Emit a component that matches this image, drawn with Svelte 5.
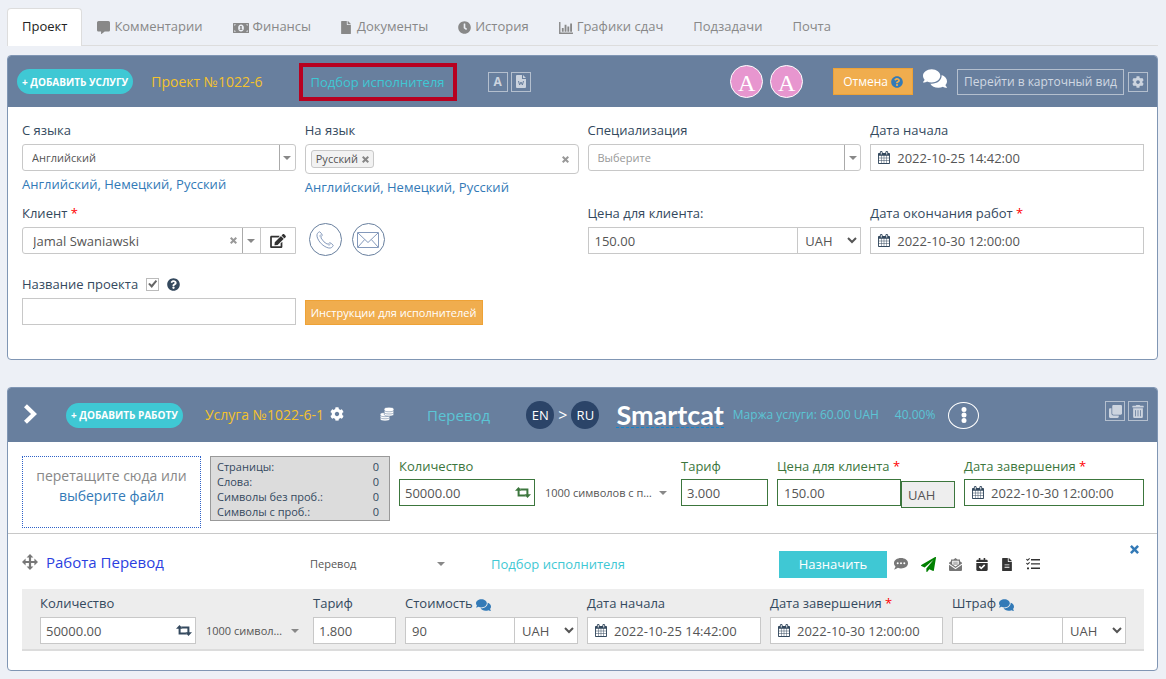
<script>
  const icons = {
    comment: ['0 0 512 512', 'M448 0H64C28.7 0 0 28.7 0 64v288c0 35.3 28.7 64 64 64h96v84c0 9.8 11.2 15.5 19.1 9.7L304 416h144c35.3 0 64-28.7 64-64V64c0-35.3-28.7-64-64-64z'],
    money: ['0 0 640 400', 'M20 0H620Q640 0 640 20V380Q640 400 620 400H20Q0 400 0 380V20Q0 0 20 0ZM50 50V110Q100 105 110 50ZM590 50V110Q540 105 530 50ZM50 350V290Q100 295 110 350ZM590 350V290Q540 295 530 350ZM320 60C250 60 205 120 205 200S250 340 320 340 435 280 435 200 390 60 320 60ZM290 120H350V245H375V280H265V245H292V165H265Z'],
    file: ['0 0 384 512', 'M224 136V0H24C10.7 0 0 10.7 0 24v464c0 13.3 10.7 24 24 24h336c13.3 0 24-10.7 24-24V160H248c-13.2 0-24-10.8-24-24zm160-14.1v6.1H256V0h6.1c6.4 0 12.5 2.5 17 7l97.9 98c4.5 4.5 7 10.6 7 16.9z'],
    clock: ['0 0 512 512', 'M256,8C119,8,8,119,8,256S119,504,256,504,504,393,504,256,393,8,256,8Zm92.49,313h0l-20,25a16,16,0,0,1-22.49,2.5h0l-67-49.72a40,40,0,0,1-15-31.23V112a16,16,0,0,1,16-16h32a16,16,0,0,1,16,16V256l58,42.5A16,16,0,0,1,348.49,321Z'],
    chart: ['0 0 15 13', 'M0 0H1.5V11.3H15V13H0ZM3 6.500H5V10.500H3ZM6 3H8V10.500H6ZM9 5H11V10.500H9ZM12 1.500H14V10.500H12Z'],
    comments: ['0 32 576 448', 'M416 192c0-88.4-93.1-160-208-160S0 103.6 0 192c0 34.3 14.1 65.9 38 92-13.4 30.2-35.5 54.2-35.8 54.5-2.2 2.3-2.8 5.7-1.5 8.7S4.8 352 8 352c36.6 0 66.9-12.3 88.7-25 32.2 15.7 70.3 25 111.3 25 114.9 0 208-71.6 208-160zm122 220c23.9-26 38-57.7 38-92 0-66.9-53.5-124.2-129.3-148.1.9 6.6 1.3 13.3 1.3 20.1 0 105.9-107.7 192-240 192-10.8 0-21.3-.8-31.7-1.9C207.8 439.6 281.8 480 368 480c41 0 79.1-9.2 111.3-25 21.8 12.7 52.1 25 88.7 25 3.2 0 6.1-1.9 7.3-4.8 1.3-2.9.7-6.3-1.5-8.7-.3-.3-22.4-24.2-35.8-54.5z'],
    cog: ['0 0 512 512', 'M487.4 315.7l-42.6-24.6c4.3-23.2 4.3-47 0-70.2l42.6-24.6c4.9-2.8 7.1-8.6 5.5-14-11.1-35.6-30-67.8-54.7-94.6-3.8-4.1-10-5.1-14.8-2.3L380.8 110c-17.9-15.4-38.5-27.3-60.8-35.1V25.8c0-5.6-3.9-10.5-9.4-11.7-36.7-8.2-74.3-7.8-109.2 0-5.5 1.2-9.4 6.1-9.4 11.7V75c-22.2 7.9-42.8 19.8-60.8 35.1L88.7 85.5c-4.9-2.8-11-1.9-14.8 2.3-24.7 26.7-43.6 58.9-54.7 94.6-1.7 5.4.6 11.2 5.5 14L67.3 221c-4.3 23.2-4.3 47 0 70.2l-42.6 24.6c-4.9 2.8-7.1 8.6-5.5 14 11.1 35.6 30 67.8 54.7 94.6 3.8 4.1 10 5.1 14.8 2.3l42.6-24.6c17.9 15.4 38.5 27.3 60.8 35.1v49.2c0 5.6 3.9 10.5 9.4 11.7 36.7 8.2 74.3 7.8 109.2 0 5.5-1.2 9.4-6.1 9.4-11.7v-49.2c22.2-7.9 42.8-19.8 60.8-35.1l42.6 24.6c4.9 2.8 11 1.9 14.8-2.3 24.7-26.7 43.6-58.9 54.7-94.6 1.5-5.5-.7-11.3-5.6-14.1zM256 336c-44.1 0-80-35.9-80-80s35.9-80 80-80 80 35.9 80 80-35.9 80-80 80z'],
    question: ['0 0 512 512', 'M504 256c0 136.997-111.043 248-248 248S8 392.997 8 256C8 119.083 119.043 8 256 8s248 111.083 248 248zM262.655 90c-54.497 0-89.255 22.957-116.549 63.758-3.536 5.286-2.353 12.415 2.715 16.258l34.699 26.31c5.205 3.947 12.621 3.008 16.665-2.122 17.864-22.658 30.113-35.797 57.303-35.797 20.429 0 45.698 13.148 45.698 32.958 0 14.976-12.363 22.667-32.534 33.976C247.128 238.528 216 254.941 216 296v4c0 6.627 5.373 12 12 12h56c6.627 0 12-5.373 12-12v-1.333c0-28.462 83.186-29.647 83.186-106.667 0-58.002-60.165-102-116.531-102zM256 338c-25.365 0-46 20.635-46 46 0 25.364 20.635 46 46 46s46-20.636 46-46c0-25.365-20.635-46-46-46z'],
    calendar: ['64 0 1664 1792', 'M192 1664h288v-288h-288v288zm352 0h320v-288h-320v288zm-352-352h288v-320h-288v320zm352 0h320v-320h-320v320zm-352-384h288v-288h-288v288zm736 736h320v-288h-320v288zm-384-736h320v-288h-320v288zm768 736h288v-288h-288v288zm-384-352h320v-320h-320v320zm-352-864v-288q0-13-9.5-22.5t-22.5-9.5h-64q-13 0-22.5 9.5t-9.5 22.5v288q0 13 9.5 22.5t22.5 9.5h64q13 0 22.5-9.5t9.5-22.5zm736 864h288v-320h-288v320zm-384-384h320v-288h-320v288zm384 0h288v-288h-288v288zm32-480v-288q0-13-9.5-22.5t-22.5-9.5h-64q-13 0-22.5 9.5t-9.5 22.5v288q0 13 9.5 22.5t22.5 9.5h64q13 0 22.5-9.5t9.5-22.5zm384-64v1280q0 52-38 90t-90 38h-1408q-52 0-90-38t-38-90v-1280q0-52 38-90t90-38h128v-96q0-66 47-113t113-47h64q66 0 113 47t47 113v96h384v-96q0-66 47-113t113-47h64q66 0 113 47t47 113v96h128q52 0 90 38t38 90z'],
    edit: ['0 0 576 512', 'M402.6 83.2l90.2 90.2c3.8 3.8 3.8 10 0 13.8L274.4 405.6l-92.8 10.3c-12.4 1.4-22.9-9.1-21.5-21.5l10.3-92.8L388.8 83.2c3.8-3.8 10-3.8 13.8 0zm162-22.9l-48.8-48.8c-15.2-15.2-39.9-15.2-55.2 0l-35.4 35.4c-3.8 3.8-3.8 10 0 13.8l90.2 90.2c3.8 3.8 10 3.8 13.8 0l35.4-35.4c15.2-15.3 15.2-40 0-55.2zM384 346.2V448H64V128h229.8c3.2 0 6.2-1.3 8.5-3.5l40-40c7.6-7.6 2.2-20.5-8.5-20.5H48C21.5 64 0 85.5 0 112v352c0 26.5 21.5 48 48 48h352c26.5 0 48-21.5 48-48V306.2c0-10.7-12.9-16-20.5-8.5l-40 40c-2.2 2.3-3.5 5.3-3.5 8.5z'],
    plane: ['0 0 1792 1792', 'M1764 11q33 24 27 64l-256 1536q-5 29-32 45-14 8-31 8-11 0-24-5l-453-185-242 295q-18 23-49 23-13 0-22-4-19-7-30.5-23.5t-11.5-36.5v-349l864-1059-1069 925-395-162q-37-14-40-55-2-40 32-59L1688 9q15-9 32-9 24 0 44 11z'],
    fileLines: ['0 0 384 512', 'M224 136V0H24C10.7 0 0 10.7 0 24v464c0 13.3 10.7 24 24 24h336c13.3 0 24-10.7 24-24V160H248c-13.2 0-24-10.8-24-24zm64 248H96V346H288V384ZM288 290H96V252H288V290zm96-168.100v6.100H256V0h6.1c6.4 0 12.5 2.5 17 7l97.9 98c4.5 4.5 7 10.6 7 16.9z'],
    calendarCheck: ['0 0 448 512', 'M436 160H12c-6.627 0-12-5.373-12-12v-36c0-26.51 21.49-48 48-48h48V12c0-6.627 5.373-12 12-12h40c6.627 0 12 5.373 12 12v52h128V12c0-6.627 5.373-12 12-12h40c6.627 0 12 5.373 12 12v52h48c26.51 0 48 21.49 48 48v36c0 6.627-5.373 12-12 12zM12 192h424c6.627 0 12 5.373 12 12v260c0 26.51-21.49 48-48 48H48c-26.51 0-48-21.49-48-48V204c0-6.627 5.373-12 12-12zm333.296 95.947l-28.169-28.398c-4.667-4.705-12.265-4.736-16.97-.068L194.12 364.665l-45.98-46.352c-4.667-4.705-12.266-4.736-16.971-.068l-28.397 28.17c-4.705 4.667-4.736 12.265-.068 16.97l82.601 83.269c4.667 4.705 12.265 4.736 16.97.068l142.953-141.805c4.705-4.667 4.736-12.265.068-16.97z'],
    clone: ['0 0 512 512', 'M464 0c26.51 0 48 21.49 48 48v288c0 26.51-21.49 48-48 48H176c-26.51 0-48-21.49-48-48V48c0-26.51 21.49-48 48-48h288M176 416c-44.112 0-80-35.888-80-80V128H48c-26.51 0-48 21.49-48 48v288c0 26.51 21.49 48 48 48h288c26.51 0 48-21.49 48-48v-48H176z'],
    trash: ['0 0 448 512', 'M32 464a48 48 0 0 0 48 48h288a48 48 0 0 0 48-48V128H32zm272-256a16 16 0 0 1 32 0v224a16 16 0 0 1-32 0zm-96 0a16 16 0 0 1 32 0v224a16 16 0 0 1-32 0zm-96 0a16 16 0 0 1 32 0v224a16 16 0 0 1-32 0zM432 32H312l-9.400-18.700A24 24 0 0 0 281.100 0H166.800a23.720 23.720 0 0 0-21.400 13.300L136 32H16A16 16 0 0 0 0 48v32a16 16 0 0 0 16 16h416a16 16 0 0 0 16-16V48a16 16 0 0 0-16-16z'],
    retweet: ['0 0 16 11', 'M3.500 0 7 3.800H4.600V7.600H9.600L11.200 9.400H2.600V3.800H0ZM12.500 11 9 7.200H11.400V3.400H6.400L4.800 1.600H13.400V7.200H16Z'],
    move: ['0 0 16 16', 'M8 0 11.400 3.600H9.100V6.900H12.400V4.600L16 8 12.400 11.400V9.100H9.100V12.400H11.400L8 16 4.600 12.400H6.900V9.100H3.600V11.400L0 8 3.600 4.600V6.900H6.900V3.600H4.600Z'],
    chevron: ['0 0 12 18', 'M2.700 0 12 9 2.700 18 0 15.300 6.500 9 0 2.700Z'],
    close: ['0 0 10 10', 'M2 0 5 3 8 0 10 2 7 5 10 8 8 10 5 7 2 10 0 8 3 5 0 2Z'],
    dots: ['0 0 6 16', 'M3 0A2.500 2.500 0 1 1 3 5A2.500 2.500 0 1 1 3 0ZM3 5.500A2.500 2.500 0 1 1 3 10.500A2.500 2.500 0 1 1 3 5.500ZM3 11A2.500 2.500 0 1 1 3 16A2.500 2.500 0 1 1 3 11Z'],
    bubble: ['0 0 14 12', 'M7 0C11 0 14 2.200 14 5.200S11 10.400 7 10.400C5.900 10.400 4.800 10.200 3.900 9.800 2.900 10.600 1.600 11.300 0 11.400 .8 10.500 1.300 9.400 1.500 8.500 .6 7.600 0 6.500 0 5.200 0 2.200 3 0 7 0ZM3.700 4.300A1 1 0 1 0 3.700 6.300A1 1 0 1 0 3.700 4.300ZM7 4.300A1 1 0 1 0 7 6.300A1 1 0 1 0 7 4.300ZM10.300 4.300A1 1 0 1 0 10.300 6.300A1 1 0 1 0 10.300 4.300Z'],
    mail: ['0 0 13 13', 'M6.500 0 8.500 1.500H11V3.300L13 4.800V5.500L6.500 10 0 5.500V4.800L2 3.300V1.500H4.500ZM3.200 2.700V6.300L6.500 8.600 9.800 6.300V2.700ZM4.200 3.700H8.800V4.600H4.200ZM4.200 5.500H8.800V6.400H4.200ZM0 6.800 6.500 11.200 13 6.800V12Q13 13 12 13H1Q0 13 0 12Z'],
    checklist: ['0 0 14 12', 'M0 1.500 .8 .8 1.600 1.600 3.300 0 4 .7 1.600 3ZM0 5.500 .8 4.800 1.600 5.600 3.300 4 4 4.700 1.600 7ZM1 9.400H3V11.300H1ZM5 1H14V2.400H5ZM5 5.200H14V6.600H5ZM5 9.600H14V11H5Z']
  };

  const tabs = [
    { name: 'Проект', active: true },
    { name: 'Комментарии', icon: 'comment', w: 13, h: 13 },
    { name: 'Финансы', icon: 'money', w: 16, h: 10 },
    { name: 'Документы', icon: 'file', w: 10, h: 13, wide: true },
    { name: 'История', icon: 'clock', w: 13, h: 13 },
    { name: 'Графики сдач', icon: 'chart', w: 14, h: 12 },
    { name: 'Подзадачи' },
    { name: 'Почта' }
  ];

  const stats = [
    ['Страницы:', 0],
    ['Слова:', 0],
    ['Символы без проб.:', 0],
    ['Символы с проб.:', 0]
  ];
</script>

{#snippet icon(name, w, h)}
  <svg class="icon" width={w} height={h} viewBox={icons[name][0]} fill="currentColor" fill-rule="evenodd" aria-hidden="true"><path d={icons[name][1]} /></svg>
{/snippet}

{#snippet dateField(id, value)}
  <div class="field">
    <span class="cal">{@render icon('calendar', 12, 13)}</span>
    <input {id} type="text" {value} />
  </div>
{/snippet}

{#snippet currency(label)}
  <select class="currency" aria-label={label}><option>UAH</option></select>
{/snippet}

<nav class="tabs">
  {#each tabs as t}
    <a href="#tab" class:active={t.active}>
      {#if t.icon}<span class="tab-icon" class:wide={t.wide}>{@render icon(t.icon, t.w, t.h)}</span>{/if}{t.name}
    </a>
  {/each}
</nav>

<section class="panel project">
  <header>
    <button class="pill">+ ДОБАВИТЬ УСЛУГУ</button>
    <h2 class="number">Проект №1022-6</h2>
    <a class="pick framed" href="#pick">Подбор исполнителя</a>
    <div class="pair">
      <button class="square letter" aria-label="A">A</button>
      <button class="square" aria-label="Word">
        <svg width="10" height="13" viewBox="0 0 10 13" aria-hidden="true">
          <path d="M1 0H6V4H10V12Q10 13 9 13H1Q0 13 0 12V1Q0 0 1 0ZM7 0 10 3H7Z" fill="currentColor" />
          <path d="M2.500 6 3.600 10 5 7 6.400 10 7.500 6" fill="none" stroke="#687f9e" stroke-width="1" />
        </svg>
      </button>
    </div>
    <div class="avatars">
      <span class="avatar">A</span>
      <span class="avatar">A</span>
    </div>
    <button class="orange cancel">Отмена <span class="blue">{@render icon('question', 12, 12)}</span></button>
    <button class="bare talk" aria-label="Чат">{@render icon('comments', 24, 19)}</button>
    <button class="outline">Перейти в карточный вид</button>
    <button class="square" aria-label="Настройки">{@render icon('cog', 12, 12)}</button>
  </header>

  <div class="form">
    <div class="group">
      <label for="from">С языка</label>
      <div class="combo">
        <select id="from"><option>Английский</option></select>
        <span class="caret"></span>
      </div>
      <p class="links"><a href="#en">Английский</a>, <a href="#de">Немецкий</a>, <a href="#ru">Русский</a></p>
    </div>
    <div class="group">
      <label for="to">На язык</label>
      <div class="chips">
        <span class="chip">Русский <button class="bare" aria-label="Удалить">{@render icon('close', 7, 7)}</button></span>
        <input id="to" type="text" />
        <button class="bare" aria-label="Очистить">{@render icon('close', 7, 7)}</button>
      </div>
      <p class="links"><a href="#en">Английский</a>, <a href="#de">Немецкий</a>, <a href="#ru">Русский</a></p>
    </div>
    <div class="group">
      <label for="spec">Специализация</label>
      <div class="combo empty">
        <select id="spec"><option>Выберите</option></select>
        <span class="caret"></span>
      </div>
    </div>
    <div class="group">
      <label for="start">Дата начала</label>
      {@render dateField('start', '2022-10-25 14:42:00')}
    </div>

    <div class="group">
      <label for="client">Клиент <b>*</b></label>
      <div class="combo client">
        <select id="client"><option>Jamal Swaniawski</option></select>
        <button class="bare clear" aria-label="Очистить">{@render icon('close', 7, 7)}</button>
        <span class="caret"></span>
        <button class="bare edit" aria-label="Редактировать">{@render icon('edit', 16, 14)}</button>
      </div>
    </div>
    <div class="contacts">
      <button class="round" aria-label="Позвонить">
        <svg width="18" height="18" viewBox="0 0 18 18" fill="none" stroke="currentColor" aria-hidden="true"><path d="M3.600 .8C2 1.200 .6 3 1 5.200 2 10.500 7.500 16 12.800 17 15 17.400 16.800 16 17.200 14.400Q15.500 12 13.800 11.700 12.500 13.400 11 13 8 11.800 5 7 4.600 5.500 6.300 4.200 6 2.500 3.600 .8ZM4.800 3.600Q3.800 4.600 4 5.600M12.400 14Q13.400 14.200 14.400 13.200" /></svg>
      </button>
      <button class="round" aria-label="Написать">
        <svg width="22" height="16" viewBox="0 0 22 16" fill="none" stroke="currentColor" aria-hidden="true"><path d="M.5 .5H21.500V15.500H.5ZM1 1 11 10.500 21 1M1 15 7.700 7.500M21 15 14.300 7.500" /></svg>
      </button>
    </div>
    <div class="group">
      <label for="price">Цена для клиента:</label>
      <div class="joined">
        <input id="price" type="text" value="150.00" />
        {@render currency('Валюта цены')}
      </div>
    </div>
    <div class="group">
      <label for="end">Дата окончания работ <b>*</b></label>
      {@render dateField('end', '2022-10-30 12:00:00')}
    </div>

    <div class="group">
      <div class="name-line">
        <label for="name">Название проекта</label>
        <input type="checkbox" checked aria-label="Показывать название" />
        {@render icon('question', 13, 13)}
      </div>
      <div class="field"><input id="name" type="text" /></div>
    </div>
    <div class="bottom">
      <button class="orange guide">Инструкции для исполнителей</button>
    </div>
  </div>
</section>

<section class="panel">
  <header class="service-head">
    <button class="bare expand" aria-label="Развернуть">{@render icon('chevron', 13, 20)}</button>
    <button class="pill">+ ДОБАВИТЬ РАБОТУ</button>
    <h2 class="number small">Услуга №1022-6-1</h2>
    <button class="bare settings" aria-label="Настройки услуги">{@render icon('cog', 14, 14)}</button>
    <button class="bare coins" aria-label="Оплата">
      <svg width="14" height="14" viewBox="0 0 14 14" aria-hidden="true">
        <g fill="#fff" stroke="#687f9e" stroke-width=".6">
          <ellipse cx="5" cy="11.800" rx="4.900" ry="2.100" /><ellipse cx="5" cy="9.700" rx="4.900" ry="2.100" /><ellipse cx="5" cy="7.600" rx="4.900" ry="2.100" />
          <ellipse cx="9" cy="7" rx="4.900" ry="2.100" /><ellipse cx="9" cy="4.900" rx="4.900" ry="2.100" /><ellipse cx="9" cy="2.500" rx="4.900" ry="2.300" />
        </g>
      </svg>
    </button>
    <a class="kind" href="#service">Перевод</a>
    <div class="langs"><span>EN</span><i>&gt;</i><span>RU</span></div>
    <a class="smartcat" href="#smartcat">Smartcat</a>
    <p class="margin">Маржа услуги: 60.00 UAH</p>
    <p class="margin percent">40.00%</p>
    <button class="more" aria-label="Ещё">{@render icon('dots', 6, 16)}</button>
    <div class="pair end">
      <button class="square" aria-label="Копировать">{@render icon('clone', 13, 13)}</button>
      <button class="square" aria-label="Удалить">{@render icon('trash', 12, 13)}</button>
    </div>
  </header>

  <div class="service">
    <div class="drop">перетащите сюда или <a href="#file">выберите файл</a></div>
    <dl class="stats">
      {#each stats as [k, v]}
        <div><dt>{k}</dt><dd>{v}</dd></div>
      {/each}
    </dl>
    <div class="group green">
      <label for="qty">Количество</label>
      <div class="field"><input id="qty" type="text" value="50000.00" /><span class="swap">{@render icon('retweet', 16, 11)}</span></div>
    </div>
    <div class="unit">
      <select aria-label="Единица"><option>1000 символов с пробелами</option></select>
      <span class="arrow"></span>
    </div>
    <div class="group green">
      <label for="rate">Тариф</label>
      <div class="field"><input id="rate" type="text" value="3.000" /></div>
    </div>
    <div class="group green">
      <label for="cprice">Цена для клиента <b>*</b></label>
      <div class="joined fixed">
        <input id="cprice" type="text" value="150.00" />
        <input class="cur" type="text" value="UAH" readonly aria-label="Валюта" />
      </div>
    </div>
    <div class="group green">
      <label for="done">Дата завершения <b>*</b></label>
      {@render dateField('done', '2022-10-30 12:00:00')}
    </div>
  </div>

  <div class="job">
    <div class="job-head">
      <div class="job-title"><span class="grip">{@render icon('move', 16, 16)}</span><a href="#job">Работа Перевод</a></div>
      <div class="unit job-kind">
        <select aria-label="Вид работы"><option>Перевод</option></select>
        <span class="arrow"></span>
      </div>
      <a class="pick" href="#pick2">Подбор исполнителя</a>
      <div class="actions">
        <button class="assign">Назначить</button>
        <button class="bare grey" aria-label="Комментарий">{@render icon('bubble', 14, 12)}</button>
        <button class="bare leaf" aria-label="Отправить">{@render icon('plane', 15, 15)}</button>
        <button class="bare grey" aria-label="Письмо">{@render icon('mail', 13, 13)}</button>
        <button class="bare" aria-label="Календарь">{@render icon('calendarCheck', 12, 13)}</button>
        <button class="bare" aria-label="Документ">{@render icon('fileLines', 10, 13)}</button>
        <button class="bare" aria-label="Список">{@render icon('checklist', 14, 12)}</button>
      </div>
      <button class="bare dismiss" aria-label="Закрыть">{@render icon('close', 9, 9)}</button>
    </div>
    <div class="job-form">
      <div class="group">
        <label for="jqty">Количество</label>
        <div class="field"><input id="jqty" type="text" value="50000.00" /><span class="swap">{@render icon('retweet', 16, 11)}</span></div>
      </div>
      <div class="unit">
        <select aria-label="Единица работы"><option>1000 символов с пробелами</option></select>
        <span class="arrow"></span>
      </div>
      <div class="group">
        <label for="jrate">Тариф</label>
        <div class="field"><input id="jrate" type="text" value="1.800" /></div>
      </div>
      <div class="group">
        <label for="jcost">Стоимость <span class="blue">{@render icon('comments', 15, 12)}</span></label>
        <div class="joined">
          <input id="jcost" type="text" value="90" />
          {@render currency('Валюта стоимости')}
        </div>
      </div>
      <div class="group">
        <label for="jstart">Дата начала</label>
        {@render dateField('jstart', '2022-10-25 14:42:00')}
      </div>
      <div class="group">
        <label for="jend">Дата завершения <b>*</b></label>
        {@render dateField('jend', '2022-10-30 12:00:00')}
      </div>
      <div class="group">
        <label for="jfine">Штраф <span class="blue">{@render icon('comments', 15, 12)}</span></label>
        <div class="joined">
          <input id="jfine" type="text" />
          {@render currency('Валюта штрафа')}
        </div>
      </div>
    </div>
  </div>
</section>

<style>
  :global(body) {
    margin: 0;
    background: #edf0f6;
    font: 13px/20px "Open Sans", sans-serif;
    color: #34495e;
  }
  :global(#app) { padding: 8px 8px 8px 7px; }
  :global(#app *) { box-sizing: border-box; }
  a { color: #337ab7; text-decoration: none; }
  p, h2, dl, dd { margin: 0; }
  button, input, select { font: inherit; color: inherit; border-radius: 0; margin: 0; }
  button { padding: 0; cursor: pointer; flex: none; white-space: nowrap; }
  input { min-width: 0; }
  .icon { display: inline-block; vertical-align: middle; flex: none; }
  .bare { border: 0; background: none; display: inline-flex; align-items: center; justify-content: center; }

  .tabs { display: flex; border-bottom: 1px solid #ddd; }
  .tabs a {
    padding: 7px 14px 10px;
    border: 1px solid transparent;
    border-bottom: 0;
    border-radius: 4px 4px 0 0;
    color: #888;
    margin-bottom: -1px;
    white-space: nowrap;
  }
  .tabs a.active { background: #fff; border-color: #ddd; color: #222; }
  .tab-icon { margin-right: 4px; }
  .tab-icon.wide { margin-right: 6px; }

  .panel { background: #fff; border: 1px solid #8096b4; border-radius: 4px; margin-top: 9px; }
  .panel + .panel { margin-top: 27px; }
  header {
    display: flex;
    align-items: center;
    height: 51px;
    padding: 0 9px;
    background: #687f9e;
    border-radius: 3px 3px 0 0;
    color: #fff;
  }
  .pill {
    height: 25px;
    padding: 0 5px;
    border: 0;
    border-radius: 13px;
    background: #3fc8d4;
    color: #fff;
    font-size: 10px;
    font-weight: 700;
  }
  .number { margin-left: 18px; font-size: 14px; font-weight: 400; color: #f4c22c; white-space: nowrap; }
  .pick { color: #3fc8d4; white-space: nowrap; }
  .framed { margin-left: 36px; padding: 5px 8px; border: 4px solid #b80020; }
  .pair { display: flex; gap: 3px; margin-left: 31px; }
  .pair.end { margin-left: auto; margin-bottom: 8px; }
  .square {
    width: 20px;
    height: 20px;
    display: grid;
    place-items: center;
    border: 1px solid #b4bfce;
    background: none;
    color: #ccd4df;
  }
  .letter { font-size: 12px; line-height: 12px; font-weight: 700; }
  .avatars { display: flex; gap: 7px; margin-left: auto; }
  .avatar {
    width: 33px;
    height: 33px;
    border: 1px solid #fff;
    border-radius: 50%;
    background: #e796cf;
    font: 24px/34px "Liberation Serif", serif;
    text-align: center;
  }
  .orange { border: 1px solid #eea236; background: #f0ad4e; color: #fff; }
  .cancel { height: 27px; margin-left: 30px; padding: 0 9px; font-size: 12px; font-weight: 500; }
  .blue { color: #337ab7; }
  .talk { margin: 0 10px; padding-bottom: 6px; }
  .outline { height: 26px; padding: 0 6px; margin-right: 4px; border: 1px solid #b4bfce; background: none; color: #d0d8e2; font-size: 12px; }

  .form {
    display: grid;
    grid-template-columns: repeat(4, minmax(0, 1fr));
    column-gap: 9px;
    row-gap: 6px;
    padding: 13px 13px 34px 14px;
  }
  label { display: block; margin-bottom: 4px; white-space: nowrap; }
  label b { color: #f00; font-weight: 400; }
  .field, .combo, .chips, .joined { display: flex; align-items: center; }
  .field, .combo { height: 27px; border: 1px solid #c8c8c8; background: #fff; }
  .field input { flex: 1; width: 0; border: 0; background: none; padding: 0 6px 0 5px; color: #555; }
  .cal { display: flex; padding: 0 2px 0 7px; color: #34495e; }
  .combo { border-radius: 3px; }
  .combo select { flex: 1; min-width: 0; height: 25px; border: 0; background: none; appearance: none; padding: 0 9px; font-size: 11px; color: #555; }
  .combo.empty select { color: #999; }
  .combo.client select { font-size: 13px; padding: 0 10px; }
  .combo.client { border-radius: 3px 0 0 3px; }
  .caret { display: grid; place-items: center; width: 16px; height: 25px; border-left: 1px solid #aaa; }
  .caret::before, .arrow { content: ""; border: 4px solid transparent; border-top-color: #888; border-bottom: 0; }
  .clear { width: 16px; color: #999; }
  .edit { width: 35px; height: 25px; border-left: 1px solid #c8c8c8; color: #333; }
  .client .caret { width: 18px; }
  .chips { height: 30px; padding: 0 9px 0 5px; border: 1px solid #c8c8c8; border-radius: 4px; color: #999; }
  .chips input { flex: 1; border: 0; background: none; }
  .chip { display: flex; align-items: center; gap: 4px; height: 18px; padding: 0 4px; border: 1px solid #c8c8c8; border-radius: 3px; background: #f2f2f2; font-size: 11px; color: #555; }
  .chip button { color: #888; }
  .links { margin-top: 3px; color: #337ab7; white-space: nowrap; }
  .joined input { flex: 1; height: 27px; border: 1px solid #c8c8c8; background: #fff; padding: 0 6px; color: #555; }
  .joined .currency { width: 63px; height: 27px; border: 1px solid #c8c8c8; border-left: 0; background: #fff; color: #555; padding: 0 2px 0 3px; }
  .contacts { display: flex; gap: 10px; padding: 20px 4px 0; }
  .round { width: 33px; height: 33px; display: grid; place-items: center; border: 1px solid #687f9e; border-radius: 50%; background: none; color: #8499bb; }
  .name-line { display: flex; align-items: center; gap: 8px; height: 20px; margin: 0 0 4px; }
  .name-line label { margin: 0; }
  input[type="checkbox"] { appearance: none; width: 13px; height: 13px; border: 1px solid #bbb; display: grid; place-items: center; }
  input[type="checkbox"]::before { content: ""; width: 9px; height: 8px; background: #666; clip-path: polygon(0 50%, 18% 36%, 38% 60%, 84% 0, 100% 16%, 40% 100%); }
  .bottom { display: flex; align-items: flex-end; }
  .guide { height: 25px; padding: 0 5px; font-size: 11px; font-weight: 500; }
  .contacts { min-height: 65px; }
  .bottom { min-height: 51px; }

  .service-head { height: 54px; padding: 0 9px 0 16px; }
  .service-head .pill { margin-left: 29px; }
  .expand { padding-bottom: 2px; }
  .number.small { margin-left: 22px; }
  .settings { margin-left: 6px; padding-bottom: 3px; }
  .coins { margin-left: 36px; padding-bottom: 3px; }
  .kind { margin-left: 33px; font-size: 15px; color: #5bc5d5; }
  .langs { display: flex; align-items: center; gap: 4px; margin-left: 36px; }
  .langs span { width: 28px; height: 28px; line-height: 28px; border-radius: 50%; background: #2b4468; text-align: center; }
  .langs i { font-style: normal; font-size: 16px; }
  .smartcat { margin-left: 17px; font: 700 27px/24px Lato, sans-serif; color: #fff; border-bottom: 1px dashed #0f86d0; }
  .margin { margin-left: 9px; font-size: 12px; color: #5bc5d5; white-space: nowrap; }
  .percent { margin-left: 16px; }
  .more { width: 31px; height: 27px; margin-left: 13px; border: 1px solid #fff; border-radius: 50%; background: none; color: #fff; display: grid; place-items: center; }

  .service {
    display: grid;
    grid-template-columns: 179fr 180fr 136fr 128fr 87fr 178fr 180fr;
    gap: 9px;
    padding: 14px 13px 5px 14px;
    border-bottom: 1px solid #c8c8c8;
  }
  .service > *, .job-form > *, .form > * { min-width: 0; }
  .drop { height: 72px; padding: 9px 12px; border: 1px dotted #2f62c8; font-size: 14px; text-align: center; color: #888; }
  .stats { height: 65px; padding: 1px 10px 0 6px; border: 1px solid #999; background: #dcdcdc; font-size: 11px; line-height: 15px; }
  .stats div { display: flex; justify-content: space-between; height: 15px; line-height: 17px; }
  .green { color: #3c763d; }
  .green label { margin-bottom: 3px; }
  .green .field, .green .joined input { border-color: #3c763d; }
  .joined.fixed { align-items: flex-start; }
  .joined .cur { flex: none; width: 54px; margin-top: 2px; background: #eee; }
  .swap { display: flex; padding-right: 3px; }
  .unit { display: flex; align-items: center; align-self: start; height: 27px; margin-top: 23px; padding: 0 4px 0 1px; }
  .unit select { flex: 1; min-width: 0; border: 0; background: none; appearance: none; padding: 0; font-size: 11px; color: #555; text-overflow: ellipsis; }
  .unit .arrow { margin-left: 3px; margin-right: 1px; }

  .job { padding: 0 13px 19px 14px; }
  .job-head { display: grid; grid-template-columns: 282fr 187fr 288fr 339fr 26fr; height: 55px; align-items: center; }
  .job-title { display: flex; align-items: center; gap: 8px; }
  .job-title a { font-size: 15px; color: #2b3fe0; white-space: nowrap; }
  .grip { display: flex; color: #777; }
  .job-kind { align-self: center; margin: 5px 0 0; padding: 0 45px 0 6px; }
  .job-head .pick, .actions { margin-top: 5px; }
  .actions { display: flex; align-items: center; gap: 14px; color: #333; }
  .assign { width: 108px; height: 27px; border: 0; background: #3fc8d4; color: #fff; margin-right: -7px; }
  .actions .leaf { margin: 0 -1px; }
  .grey { color: #777; }
  .leaf { color: #008000; }
  .dismiss { justify-self: end; align-self: start; padding: 11px 5px 0 0; color: #337ab7; }
  .job-form {
    display: grid;
    grid-template-columns: 156fr 99fr 83fr 173fr 174fr 173fr 174fr;
    gap: 9px;
    padding: 4px 18px 5px;
    background: #ededed;
    border-bottom: 2px solid #dcdcdc;
  }
  .job-form .unit { margin-top: 24px; }
</style>
